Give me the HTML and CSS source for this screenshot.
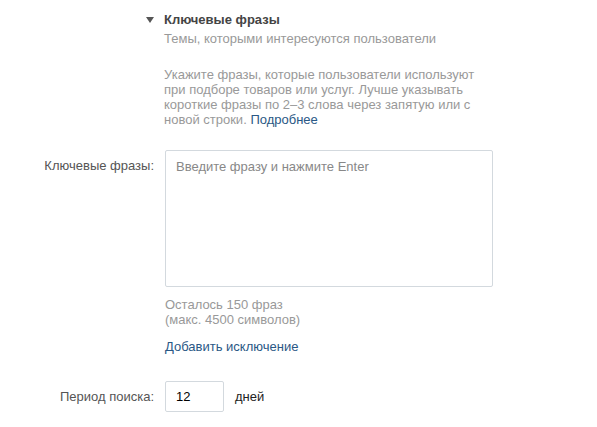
FILE: index.html
```html
<!DOCTYPE html>
<html lang="ru">
<head>
<meta charset="utf-8">
<link rel="stylesheet" href="styles.css">
</head>
<body>
<div class="page">
  <div class="section-head">
    <span class="arrow"></span>
    <span class="title">Ключевые фразы</span>
  </div>
  <div class="section-body">
    <div class="subtitle">Темы, которыми интересуются пользователи</div>
    <p class="hint">Укажите фразы, которые пользователи используют при подборе товаров или услуг. Лучше указывать короткие фразы по 2–3 слова через запятую или с новой строки. <a class="link" href="#">Подробнее</a></p>
  </div>
  <div class="row row-phrases">
    <div class="label">Ключевые фразы:</div>
    <div class="field">
      <div class="textarea"><span class="placeholder">Введите фразу и нажмите Enter</span></div>
      <div class="counter">Осталось 150 фраз<br>(макс. 4500 символов)</div>
      <a class="link add" href="#">Добавить исключение</a>
    </div>
  </div>
  <div class="row row-period">
    <div class="label">Период поиска:</div>
    <div class="field inline">
      <div class="input">12</div>
      <span class="unit">дней</span>
    </div>
  </div>
</div>
</body>
</html>
```

FILE: styles.css
```css
html, body {
  margin: 0;
  padding: 0;
  background: #fff;
}
body {
  font-family: "Liberation Sans", Arial, sans-serif;
  font-size: 13px;
  line-height: 15px;
  color: #222;
}
.page {
  padding-top: 12px;
}
.section-head {
  display: flex;
  align-items: center;
  padding-left: 146px;
  height: 15px;
}
.arrow {
  width: 0;
  height: 0;
  border-left: 4px solid transparent;
  border-right: 4px solid transparent;
  border-top: 6px solid #555;
  margin-right: 10px;
  margin-top: 1px;
}
.title {
  font-weight: bold;
  color: #444;
}
.section-body {
  padding-left: 164px;
  width: 318px;
}
.subtitle {
  color: #999;
  margin-top: 4px;
}
.hint {
  color: #999;
  margin: 21px 0 0 0;
}
.link {
  color: #2a5885;
  text-decoration: none;
}
.row {
  display: flex;
}
.row-phrases {
  margin-top: 23px;
}
.label {
  width: 154px;
  text-align: right;
  color: #555;
  flex: none;
}
.row-phrases .label {
  padding-top: 8px;
}
.field {
  margin-left: 11px;
}
.textarea {
  box-sizing: border-box;
  width: 328px;
  height: 137px;
  border: 1px solid #d3d9de;
  border-radius: 2px;
  padding: 8px 10px;
}
.placeholder {
  color: #888;
}
.counter {
  color: #999;
  margin-top: 10px;
}
.add {
  display: block;
  margin-top: 12px;
}
.row-period {
  margin-top: 27px;
  align-items: center;
}
.inline {
  display: flex;
  align-items: center;
}
.input {
  box-sizing: border-box;
  width: 59px;
  height: 31px;
  border: 1px solid #d3d9de;
  border-radius: 2px;
  padding: 7px 10px;
  color: #000;
}
.unit {
  margin-left: 11px;
  color: #222;
}
```
